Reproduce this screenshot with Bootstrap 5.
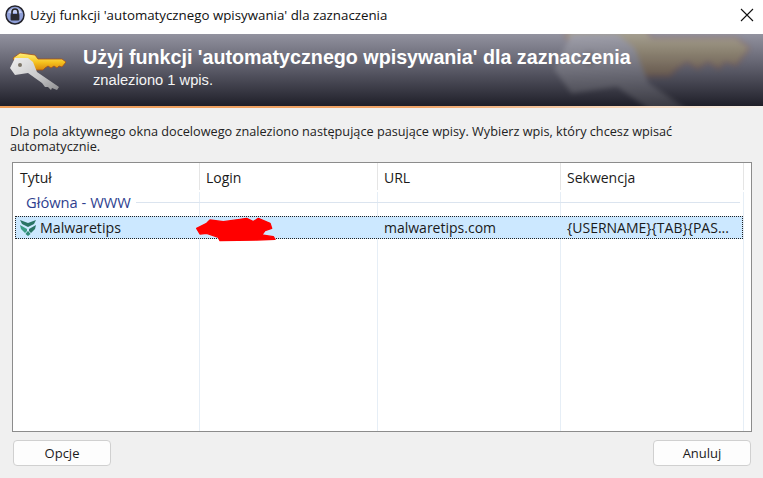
<!DOCTYPE html>
<html lang="pl">
<head>
<meta charset="utf-8">
<title>Autotype</title>
<link href="https://cdn.jsdelivr.net/npm/bootstrap@5.3.0/dist/css/bootstrap.min.css" rel="stylesheet">
<style>
html,body{height:100%;overflow:hidden}
body{background:#f0f0f0;font-family:"Open Sans","Noto Sans",sans-serif;font-size:12px;color:#1a1a1a}
.dlg{height:478px;width:763px}
.tbar{height:34px;background:#fff;padding:0 0 4px 5px;gap:5px}
.tbar-text{font-size:13.3px;color:#111;padding-top:2px}
.tbar-close{width:14px;height:14px;margin-right:9px}
.banner{height:72px;position:relative;overflow:hidden;background:linear-gradient(180deg,#92929f 0%,#5f5f6c 45%,#1f1f29 100%)}
.banner-key{position:absolute;left:554px;top:-28px;opacity:.17;filter:blur(2.5px)}
.banner-main{padding:12px 0 0 10px;gap:17px;position:relative}
.banner-icon{margin-top:4px}
.b-title{font-family:"Liberation Sans",sans-serif;font-weight:700;font-size:19.7px;line-height:23px;color:#fff;white-space:nowrap}
.b-sub{font-family:"Liberation Sans",sans-serif;font-size:14.7px;line-height:18px;color:#f4f4f4;padding-left:10px;margin-top:2px}
.accent{height:2px;background:linear-gradient(90deg,#ee9d58 0%,#f0a468 55%,#f6dcc4 85%,#f3efeb 100%)}
.desc{padding:16px 10px 0 10px;font-size:12.7px;line-height:15px;height:54px;color:#222}
.lv{margin:0 11px 0 12px;height:270px;background:#fff;border:1px solid #8c8c8c;position:relative;overflow:hidden}
.col-a{width:187px}.col-b{width:178px}.col-c{width:183px}.col-d{width:183px}
.lv-head{height:29px;font-size:14px;color:#1a1a1a}
.lv-head>div{padding:0 0 0 6px;line-height:29px;border-right:1px solid #e5e5e5;height:27px;white-space:nowrap}
.lv-head>.col-a{padding-left:7px}
.lv-grid{position:absolute;inset:29px 0 0 0;pointer-events:none}
.lv-grid>div{border-right:1px solid #e6eef6;height:100%}
.lv-group{height:20px;padding:0 11px 0 13px;gap:5px;color:#2f3f8f;font-size:14.7px;position:relative}
.lv-group span{white-space:nowrap}
.lv-group i{flex:1;height:1px;background:#dbe4ef}
.lv-row{height:23px;margin:4px 0 0 2px;width:728px;background:#cce8ff;border:1px dotted #222;font-size:14px;position:relative;color:#1a1a1a}
.lv-row>div{white-space:nowrap;line-height:21px;overflow:hidden}
.lv-row .col-a{width:184px;padding-left:4px;display:flex;align-items:center;gap:4px}
.lv-row .col-a span{font-size:14.2px}
.lv-row .col-b{width:178px;position:relative;overflow:visible}
.lv-row .col-c{padding-left:6px}
.lv-row .col-d{padding-left:6px;width:181px}
.scrib{position:absolute;left:-10px;top:-7px;overflow:visible}
.foot{padding:8px 12px 0 13px}
.wbtn{width:98px;height:26px;padding:0;background:#fdfdfd;border:1px solid #d0d0d0;border-radius:4px;font-size:13px;line-height:24px;color:#1a1a1a}
</style>
</head>
<body>
<svg width="0" height="0" class="position-absolute">
  <defs>
    <linearGradient id="ky" x1="0" y1="0" x2="0" y2="1"><stop offset="0" stop-color="#fff07a"/><stop offset=".55" stop-color="#f5c21e"/><stop offset="1" stop-color="#d8880c"/></linearGradient>
    <linearGradient id="kg" x1="0" y1="0" x2="1" y2="1"><stop offset="0" stop-color="#f0f0f0"/><stop offset=".6" stop-color="#c6c6c8"/><stop offset="1" stop-color="#8e8e90"/></linearGradient>
    <symbol id="keyart" viewBox="0 0 56 42">
      <path d="M3 8L10 3 25 5 28 9H52L56 12 52 17 49 16 47 18 44 16 41 18 38 16 35 18 33 20 20 20 6 14Z" fill="url(#ky)" stroke="#a5501a" stroke-width=".8"/>
      <path d="M0 18L5 8 18 8 23 12 27 22 49 37 47 40 42 38 41 40 38 37 35 37 32 33 18 23 5 25Z" fill="url(#kg)"/>
      <circle cx="10" cy="15" r="2" fill="#7c7568"/>
    </symbol>
  </defs>
</svg>
<div class="dlg d-flex flex-column">
  <div class="tbar d-flex align-items-center">
    <svg width="20" height="20" viewBox="0 0 20 20"><circle cx="10" cy="10" r="9" fill="#8f9fd8" stroke="#23232b" stroke-width="1.5"/><path d="M3 8a7.500 7.500 0 0 1 14 0z" fill="#c4cdf0"/><path d="M7 9V7a3 3 0 0 1 6 0v2" fill="none" stroke="#222" stroke-width="1.6"/><rect x="5.600" y="9" width="8.800" height="6.400" rx=".8" fill="#2a2a30"/></svg>
    <span class="tbar-text flex-grow-1">Użyj funkcji 'automatycznego wpisywania' dla zaznaczenia</span>
    <svg class="tbar-close" viewBox="0 0 14 14"><path d="M1 1l12 12M13 1L1 13" stroke="#111" stroke-width="1.1" fill="none"/></svg>
  </div>
  <div class="banner">
    <svg class="banner-key" width="196" height="147"><use href="#keyart"/></svg>
    <div class="banner-main d-flex">
      <svg class="banner-icon flex-shrink-0" width="56" height="42"><use href="#keyart"/></svg>
      <div>
        <div class="b-title">Użyj funkcji 'automatycznego wpisywania' dla zaznaczenia</div>
        <div class="b-sub">znaleziono 1 wpis.</div>
      </div>
    </div>
  </div>
  <div class="accent"></div>
  <div class="desc">Dla pola aktywnego okna docelowego znaleziono następujące pasujące wpisy. Wybierz wpis, który chcesz wpisać automatycznie.</div>
  <div class="lv">
    <div class="lv-grid d-flex"><div class="col-a"></div><div class="col-b"></div><div class="col-c"></div><div class="col-d"></div></div>
    <div class="lv-head d-flex"><div class="col-a">Tytuł</div><div class="col-b">Login</div><div class="col-c">URL</div><div class="col-d">Sekwencja</div></div>
    <div class="lv-group d-flex align-items-center"><span>Główna - WWW</span><i></i></div>
    <div class="lv-row d-flex">
      <div class="col-a">
        <svg width="16" height="16" viewBox="0 0 16 16" class="flex-shrink-0"><path d="M0 0L8 3 16 0 14 4 8 7 2 4Z" fill="#2a7464"/><path d="M0 5L7 9V11L5 13 1 9Z" fill="#3a9c84"/><path d="M16 5L9 9V11L11 13 15 9Z" fill="#2a7464"/><path d="M7 12L8 11 9 12 10.500 14 8 16 5.500 14Z" fill="#2f8a76"/></svg>
        <span>Malwaretips</span>
      </div>
      <div class="col-b"><svg class="scrib" width="100" height="40" viewBox="0 0 300 120"><path d="M20 55L50 40 60 30 100 35 150 28 170 25 190 35 205 25 240 40 245 55 225 62 215 75 250 80 255 88 200 90 90 92 85 82 50 70 30 72Z" fill="#ff0000" stroke="#ff0000" stroke-width="4" stroke-linejoin="round"/></svg></div>
      <div class="col-c">malwaretips.com</div>
      <div class="col-d">{USERNAME}{TAB}{PAS...</div>
    </div>
  </div>
  <div class="foot d-flex justify-content-between">
    <button type="button" class="btn wbtn">Opcje</button>
    <button type="button" class="btn wbtn">Anuluj</button>
  </div>
</div>
</body>
</html>
